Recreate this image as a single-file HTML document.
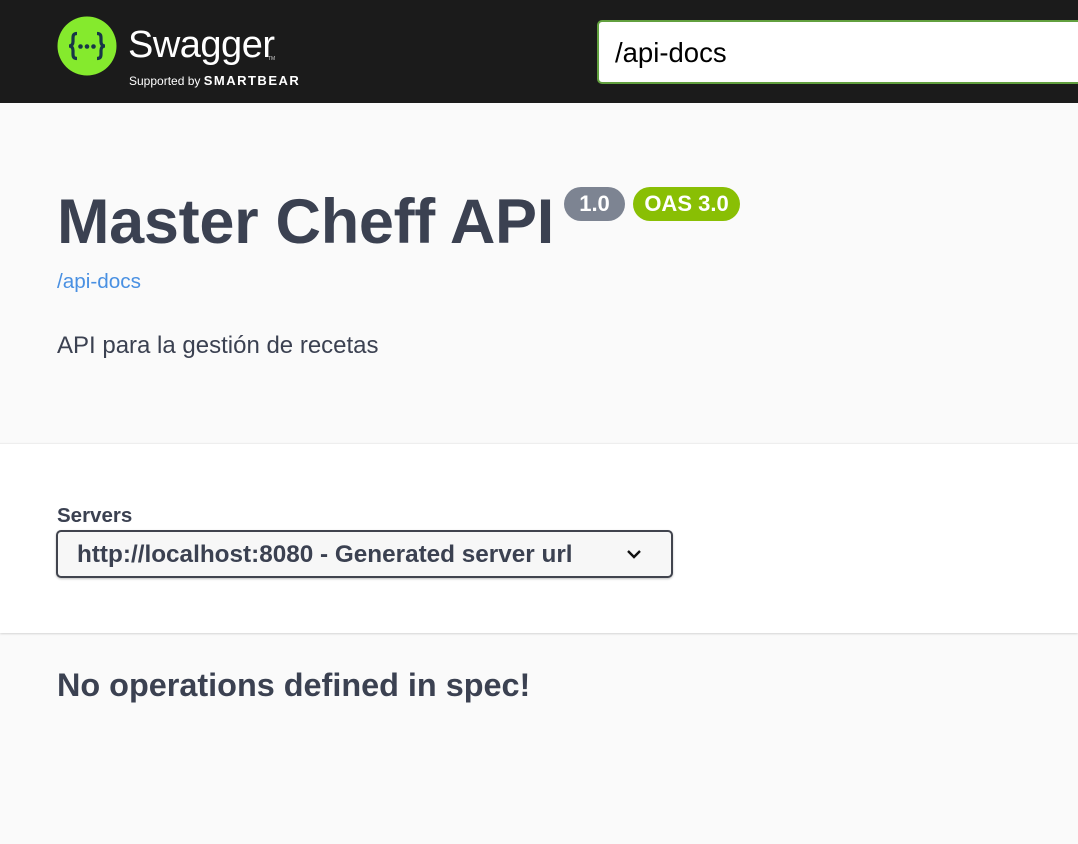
<!DOCTYPE html>
<html><head><meta charset="utf-8"><style>
*{margin:0;padding:0;box-sizing:border-box}
body{width:1078px;height:844px;overflow:hidden;background:#fafafa;font-family:"Liberation Sans",Arial,sans-serif;color:#3b4151;position:relative}
.hdr{position:absolute;left:0;top:0;width:1078px;height:103px;background:#1b1b1b}
.abs{position:absolute;white-space:nowrap}
</style></head><body>
<div class="hdr">
 <svg class="abs" style="left:57px;top:16px" width="60" height="60" viewBox="0 0 60 60">
  <circle cx="30" cy="30" r="29.5" fill="#85ea2d"/>
  <path d="M20 17.5c-4 0-4 2.5-4 5v3c0 2.5-1 4.5-4 4.5 3 0 4 2 4 4.5v3c0 2.5 0 5 4 5" fill="none" stroke="#173647" stroke-width="3.2"/>
  <path d="M40 17.5c4 0 4 2.5 4 5v3c0 2.5 1 4.5 4 4.5-3 0-4 2-4 4.5v3c0 2.5 0 5-4 5" fill="none" stroke="#173647" stroke-width="3.2"/>
  <circle cx="23.5" cy="30.5" r="2.3" fill="#173647"/><circle cx="30" cy="30.5" r="2.3" fill="#173647"/><circle cx="36.5" cy="30.5" r="2.3" fill="#173647"/>
 </svg>
 <div class="abs" style="left:128px;top:24px;font-size:38px;color:#fff;letter-spacing:-0.5px">Swagger</div>
 <div class="abs" style="left:268px;top:56px;font-size:5px;color:#ccc">TM</div>
 <div class="abs" style="left:129px;top:73px;font-size:12px;color:#fff">Supported by <span style="font-weight:bold;letter-spacing:1.5px;font-size:13px">SMARTBEAR</span></div>
 <div class="abs" style="left:597px;top:20px;width:500px;height:64px;background:#fff;border:2px solid #62a03f;border-radius:5px;font-size:27.5px;color:#000;padding:15px 0 0 16px">/api-docs</div>
</div>
<div class="abs" style="left:57px;top:186px;font-size:63px;font-weight:bold;letter-spacing:-0.3px">Master Cheff API</div>
<div class="abs" style="left:564px;top:187px;height:34px;width:61px;background:#7d8492;border-radius:17px;color:#fff;font-weight:bold;font-size:22px;text-align:center;line-height:34px">1.0</div>
<div class="abs" style="left:633px;top:187px;height:34px;width:107px;background:#89bf04;border-radius:17px;color:#fff;font-weight:bold;font-size:22px;text-align:center;line-height:34px">OAS 3.0</div>
<div class="abs" style="left:57px;top:270px;font-size:20.7px;color:#4990e2">/api-docs</div>
<div class="abs" style="left:57px;top:332px;font-size:24px">API para la gestión de recetas</div>
<div class="abs" style="left:0;top:443px;width:1078px;height:190px;background:#fff;border-top:1px solid #eee;box-shadow:0 1px 2px rgba(0,0,0,.15)"></div>
<div class="abs" style="left:57px;top:504px;font-size:20.5px;font-weight:bold">Servers</div>
<div class="abs" style="left:56px;top:530px;width:617px;height:48px;background:#f7f7f7;border:2px solid #41444e;border-radius:5px;box-shadow:0 1px 2px rgba(0,0,0,.25);font-size:24.3px;font-weight:bold;padding:9px 0 0 19px">http://localhost:8080 - Generated server url</div>
<svg class="abs" style="left:625px;top:547px" width="18" height="14" viewBox="0 0 18 14"><path d="M3 4l6 6 6-6" fill="none" stroke="#111" stroke-width="2.4"/></svg>
<div class="abs" style="left:57px;top:667px;font-size:32.4px;font-weight:bold">No operations defined in spec!</div>
</body></html>
